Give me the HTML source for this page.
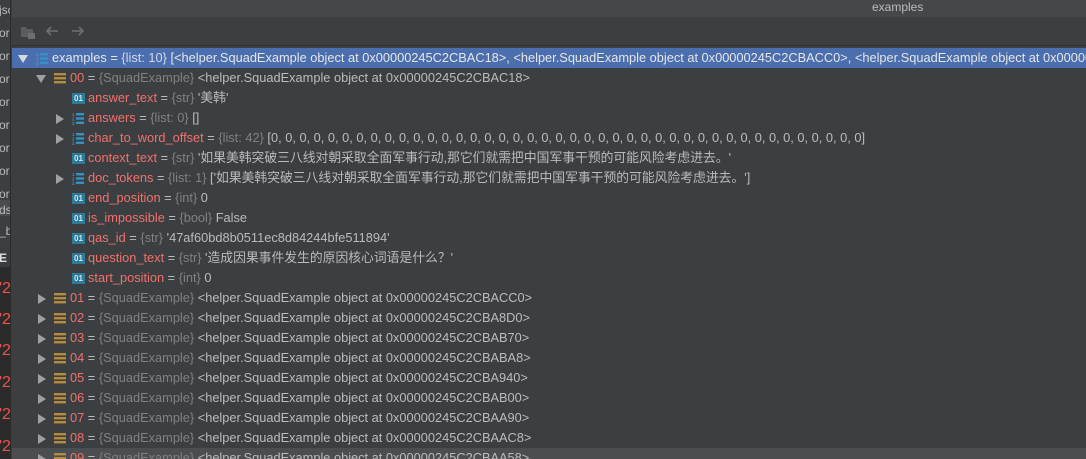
<!DOCTYPE html>
<html><head><meta charset="utf-8"><style>
*{margin:0;padding:0;box-sizing:border-box}
html,body{width:1086px;height:459px;overflow:hidden}
body{background:#3c3f41;font-family:"Liberation Sans","Noto Sans CJK SC",sans-serif;font-size:12.8px;position:relative}
#top{position:absolute;left:12px;top:0;width:1074px;height:17px;background:#45484a;color:#bbbbbb}
#top span{position:absolute;left:860px;top:0px;font-size:12px;line-height:15px}
#tb{position:absolute;left:12px;top:17px;width:1074px;height:29px;background:#3c3f41;border-bottom:1px solid #323232}
#left{position:absolute;left:0;top:0;width:11px;height:459px;background:#3c3f41;border-right:1px solid #2b2b2b;overflow:hidden;color:#bbb;font-size:12px}
.lt{position:absolute;left:-1px;white-space:nowrap}
.row{position:absolute;left:12px;width:1074px;height:20px;line-height:20px;white-space:nowrap;color:#bbbbbb;overflow:hidden}
.sel{background:#4b6eaf;color:#e6e6e6}
.sel .t{color:#d0d8ea}
.n{color:#f2706b}
.sel .n{color:#e6e6e6}
.t{color:#7f8285}
.ar{position:absolute;top:6px;width:0;height:0}
.ar.r{border-left:8px solid #a0a0a0;border-top:5px solid transparent;border-bottom:5px solid transparent}
.ar.d{border-top:8px solid #a0a0a0;border-left:5px solid transparent;border-right:5px solid transparent;top:7px}
.sel .ar.d{border-top-color:#d5d9e0}
.ic{position:absolute;top:4px}
.tx{position:absolute;top:0}
.leaf{width:13px;height:11px;background:#2e7b98;color:#d0e6ee;font-size:8px;line-height:11px;text-align:center;font-weight:bold;top:5px}
</style></head><body>
<div id="left">
<div style="position:absolute;top:0;left:0;width:11px;height:247px;background:#3c3f41"></div>
<div style="position:absolute;top:247px;left:0;width:11px;height:212px;background:#2b2b2b"></div>
<div style="position:absolute;top:200px;left:0;width:11px;height:16px;background:#4a4d50"></div>
<div style="position:absolute;top:247px;left:0;width:11px;height:20px;background:#3a3d3f"></div>
<span class="lt" style="top:3px">jsc</span>
<span class="lt" style="top:26px">or</span>
<span class="lt" style="top:49px">or</span>
<span class="lt" style="top:72px">or</span>
<span class="lt" style="top:95px">or</span>
<span class="lt" style="top:118px">or</span>
<span class="lt" style="top:141px">or</span>
<span class="lt" style="top:164px">or</span>
<span class="lt" style="top:187px">or</span>
<span class="lt" style="top:203px">ds</span>
<span class="lt" style="top:224px">_b</span>
<span class="lt" style="top:251px;font-weight:bold;color:#ddd">E</span>
<span class="lt" style="top:280px;color:#f2504a;font-size:16px">'2</span>
<span class="lt" style="top:311px;color:#f2504a;font-size:16px">'2</span>
<span class="lt" style="top:342px;color:#f2504a;font-size:16px">'2</span>
<span class="lt" style="top:374px;color:#f2504a;font-size:16px">'2</span>
<span class="lt" style="top:406px;color:#f2504a;font-size:16px">'2</span>
<span class="lt" style="top:438px;color:#f2504a;font-size:16px">'2</span>
</div>
<div id="top"><span>examples</span></div>
<div id="tb">
<svg style="position:absolute;left:8px;top:7px" width="16" height="16"><path d="M1 3h5l1 2h6v8H1z" fill="#5b5e60"/><rect x="8" y="9" width="7" height="6" fill="#6b6e70"/></svg>
<svg style="position:absolute;left:33px;top:8px" width="14" height="12"><path d="M13 6H2M6 2L2 6l4 4" stroke="#6e7173" stroke-width="1.6" fill="none"/></svg>
<svg style="position:absolute;left:59px;top:8px" width="14" height="12"><path d="M1 6h11M8 2l4 4-4 4" stroke="#6e7173" stroke-width="1.6" fill="none"/></svg>
</div>
<div id="rows" style="position:absolute;left:0;top:0;width:1086px;height:459px;overflow:hidden"></div>
<script>
var listIc='<svg class="ic" width="12" height="13" viewBox="0 0 12 13"><text x="0" y="4" font-size="4.5" fill="#5aa6d0" font-family="Liberation Sans">1</text><text x="0" y="8.5" font-size="4.5" fill="#5aa6d0" font-family="Liberation Sans">2</text><text x="0" y="13" font-size="4.5" fill="#5aa6d0" font-family="Liberation Sans">3</text><rect x="4" y="1" width="8" height="2.4" fill="#3592c4"/><rect x="4" y="5.3" width="8" height="2.4" fill="#3592c4"/><rect x="4" y="9.6" width="8" height="2.4" fill="#3592c4"/></svg>';
var objIc='<svg class="ic" width="12" height="12"><rect x="0" y="1" width="12" height="2.4" fill="#b48c3c"/><rect x="0" y="5" width="12" height="2.4" fill="#b48c3c"/><rect x="0" y="9" width="12" height="2.4" fill="#b48c3c"/></svg>';
var leafIc='<div class="ic leaf">01</div>';
var zeros=[];for(var i=0;i<42;i++)zeros.push('0');
var R=[
[0,'d','list','examples','list: 10','[&lt;helper.SquadExample object at 0x00000245C2CBAC18&gt;, &lt;helper.SquadExample object at 0x00000245C2CBACC0&gt;, &lt;helper.SquadExample object at 0x00000245C2CBA8D0&gt;]'],
[1,'d','obj','00','SquadExample','&lt;helper.SquadExample object at 0x00000245C2CBAC18&gt;'],
[2,'','leaf','answer_text','str',"'美韩'"],
[2,'r','list','answers','list: 0','[]'],
[2,'r','list','char_to_word_offset','list: 42','['+zeros.join(', ')+']'],
[2,'','leaf','context_text','str',"'如果美韩突破三八线对朝采取全面军事行动,那它们就需把中国军事干预的可能风险考虑进去。'"],
[2,'r','list','doc_tokens','list: 1',"['如果美韩突破三八线对朝采取全面军事行动,那它们就需把中国军事干预的可能风险考虑进去。']"],
[2,'','leaf','end_position','int','0'],
[2,'','leaf','is_impossible','bool','False'],
[2,'','leaf','qas_id','str',"'47af60bd8b0511ec8d84244bfe511894'"],
[2,'','leaf','question_text','str',"'造成因果事件发生的原因核心词语是什么？'"],
[2,'','leaf','start_position','int','0']
];
var addr=['CC0','8D0','B70','BA8','940','B00','A90','AC8','A58'];
for(var i=0;i<9;i++)R.push([1,'r','obj','0'+(i+1),'SquadExample','&lt;helper.SquadExample object at 0x00000245C2CBA'+addr[i]+'&gt;']);
R[12][5]='&lt;helper.SquadExample object at 0x00000245C2CBACC0&gt;';
var h='';
R.forEach(function(r,i){
 var x0=6+r[0]*18;
 var cls='row'+(i==0?' sel':'');
 var st='top:'+(48+i*20)+'px'+(i==20?';background:#4b4e50;height:11px':'');
 h+='<div class="'+cls+'" style="'+st+'">';
 if(r[1])h+='<div class="ar '+r[1]+'" style="left:'+(x0+(r[1]=='d'?0:2))+'px"></div>';
 var ic=r[2]=='list'?listIc:r[2]=='obj'?objIc:leafIc;
 h+='<div style="position:absolute;left:'+(x0+18)+'px;top:0;width:14px;height:20px">'+ic+'</div>';
 h+='<span class="tx" style="left:'+(x0+34)+'px"><span class="n">'+r[3]+'</span> = <span class="t">{'+r[4]+'}</span> '+r[5]+'</span>';
 h+='</div>';
});
document.getElementById('rows').innerHTML=h;
</script>
</body></html>
